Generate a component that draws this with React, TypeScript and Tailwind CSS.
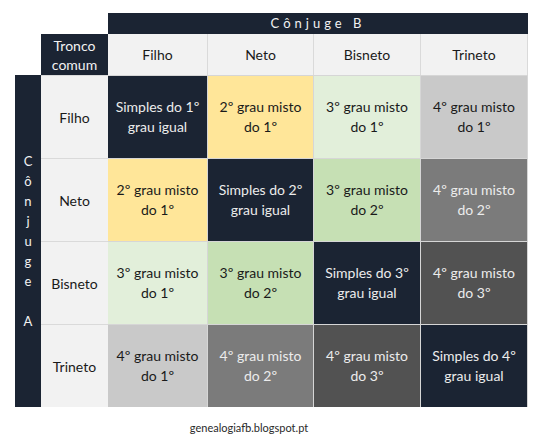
const font = { fontFamily: "Lato, 'Open Sans', sans-serif" }

const columns = ["Filho", "Neto", "Bisneto", "Trineto"]

type Cell = { text: [string, string]; bg: string; light?: boolean }

// matriz de parentesco: linha = Cônjuge A, coluna = Cônjuge B
const rows: { label: string; cells: Cell[] }[] = [
  {
    label: "Filho",
    cells: [
      { text: ["Simples do 1º", "grau igual"], bg: "bg-[#1b2433]", light: true },
      { text: ["2º grau misto", "do 1º"], bg: "bg-[#ffe699]" },
      { text: ["3º grau misto", "do 1º"], bg: "bg-[#e2efda]" },
      { text: ["4º grau misto", "do 1º"], bg: "bg-[#c9c9c9]" },
    ],
  },
  {
    label: "Neto",
    cells: [
      { text: ["2º grau misto", "do 1º"], bg: "bg-[#ffe699]" },
      { text: ["Simples do 2º", "grau igual"], bg: "bg-[#1b2433]", light: true },
      { text: ["3º grau misto", "do 2º"], bg: "bg-[#c6e0b4]" },
      { text: ["4º grau misto", "do 2º"], bg: "bg-[#7b7b7b]", light: true },
    ],
  },
  {
    label: "Bisneto",
    cells: [
      { text: ["3º grau misto", "do 1º"], bg: "bg-[#e2efda]" },
      { text: ["3º grau misto", "do 2º"], bg: "bg-[#c6e0b4]" },
      { text: ["Simples do 3º", "grau igual"], bg: "bg-[#1b2433]", light: true },
      { text: ["4º grau misto", "do 3º"], bg: "bg-[#525252]", light: true },
    ],
  },
  {
    label: "Trineto",
    cells: [
      { text: ["4º grau misto", "do 1º"], bg: "bg-[#c9c9c9]" },
      { text: ["4º grau misto", "do 2º"], bg: "bg-[#7b7b7b]", light: true },
      { text: ["4º grau misto", "do 3º"], bg: "bg-[#525252]", light: true },
      { text: ["Simples do 4º", "grau igual"], bg: "bg-[#1b2433]", light: true },
    ],
  },
]

const verticalLetters = ["C", "ô", "n", "j", "u", "g", "e", "\u00a0", "A"]

export default function App() {
  return (
    <div className="w-[544px] h-[448px] bg-white pt-[13px] pl-[15px]" style={font}>
      <div className="grid grid-cols-[26px_67px_100px_106px_107px_107px] grid-rows-[21px_41px_83px_83px_83px_83px]">
        <div className="col-span-2" />
        <div className="col-span-4 bg-[#1b2433] text-[#f2f2f2] text-[13px] tracking-[4px] flex items-center justify-center">
          Cônjuge B
        </div>

        <div />
        <div className="bg-[#1b2433] text-[#f2f2f2] text-[14px] leading-[19px] flex flex-col items-center justify-center">
          <span>Tronco</span>
          <span>comum</span>
        </div>
        {columns.map((c) => (
          <div
            key={c}
            className="bg-[#f2f2f2] text-[#1a1a1a] text-[14px] border-r border-[#dadada] flex items-center justify-center"
          >
            {c}
          </div>
        ))}

        <div className="row-span-4 bg-[#1b2433] text-[#f2f2f2] text-[13px] leading-[20px] flex flex-col items-center justify-center">
          {verticalLetters.map((l, i) => (
            <span key={i}>{l}</span>
          ))}
        </div>
        {rows.map((r) => (
          <>
            <div
              key={r.label}
              className="bg-[#f2f2f2] text-[#1a1a1a] text-[14px] border-t border-[#dadada] flex items-center justify-center"
            >
              {r.label}
            </div>
            {r.cells.map((cell, i) => (
              <div
                key={r.label + i}
                className={`${cell.bg} ${cell.light ? "text-[#ececec]" : "text-[#1a1a1a]"} text-[14px] leading-[20px] border-t border-r border-[#d6d6d6] flex flex-col items-center justify-center`}
              >
                <span>{cell.text[0]}</span>
                <span>{cell.text[1]}</span>
              </div>
            ))}
          </>
        ))}
      </div>
      <div className="w-[468px] mt-[13px] text-center text-[11px] text-[#2a2a2a]">genealogiafb.blogspot.pt</div>
    </div>
  )
}
